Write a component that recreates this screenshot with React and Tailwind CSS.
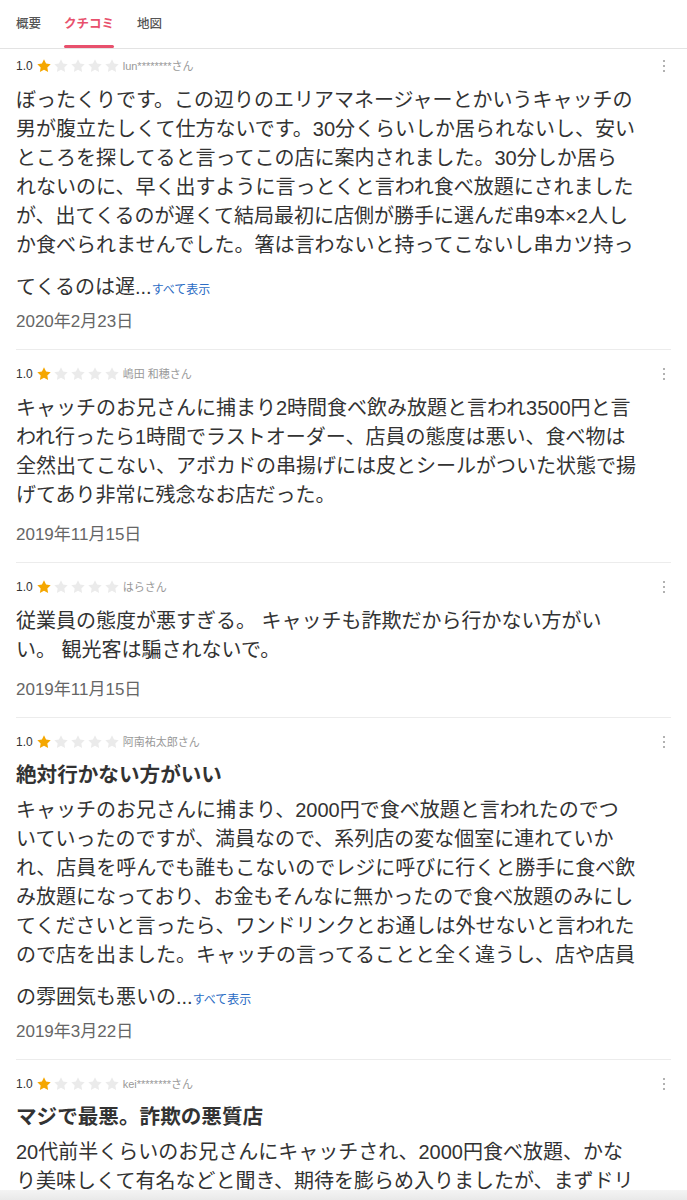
import React from "react";

const FONT = "font-['Liberation_Sans','Noto_Sans_CJK_JP',sans-serif]";

const reviews = [
  {
    user: "lun********さん",
    lines: [
      "ぼったくりです。この辺りのエリアマネージャーとかいうキャッチの",
      "男が腹立たしくて仕方ないです。30分くらいしか居られないし、安い",
      "ところを探してると言ってこの店に案内されました。30分しか居ら",
      "れないのに、早く出すように言っとくと言われ食べ放題にされました",
      "が、出てくるのが遅くて結局最初に店側が勝手に選んだ串9本×2人し",
      "か食べられませんでした。箸は言わないと持ってこないし串カツ持っ",
    ],
    more: "てくるのは遅...",
    date: "2020年2月23日",
  },
  {
    user: "嶋田 和穂さん",
    lines: [
      "キャッチのお兄さんに捕まり2時間食べ飲み放題と言われ3500円と言",
      "われ行ったら1時間でラストオーダー、店員の態度は悪い、食べ物は",
      "全然出てこない、アボカドの串揚げには皮とシールがついた状態で揚",
      "げてあり非常に残念なお店だった。",
    ],
    date: "2019年11月15日",
  },
  {
    user: "はらさん",
    lines: ["従業員の態度が悪すぎる。 キャッチも詐欺だから行かない方がい", "い。 観光客は騙されないで。"],
    date: "2019年11月15日",
  },
  {
    user: "阿南祐太郎さん",
    title: "絶対行かない方がいい",
    lines: [
      "キャッチのお兄さんに捕まり、2000円で食べ放題と言われたのでつ",
      "いていったのですが、満員なので、系列店の変な個室に連れていか",
      "れ、店員を呼んでも誰もこないのでレジに呼びに行くと勝手に食べ飲",
      "み放題になっており、お金もそんなに無かったので食べ放題のみにし",
      "てくださいと言ったら、ワンドリンクとお通しは外せないと言われた",
      "ので店を出ました。キャッチの言ってることと全く違うし、店や店員",
    ],
    more: "の雰囲気も悪いの...",
    date: "2019年3月22日",
  },
  {
    user: "kei********さん",
    title: "マジで最悪。詐欺の悪質店",
    lines: [
      "20代前半くらいのお兄さんにキャッチされ、2000円食べ放題、かな",
      "り美味しくて有名などと聞き、期待を膨らめ入りましたが、まずドリ",
    ],
    date: "",
  },
];

const Star = ({ on }) => (
  <svg viewBox="0 0 24 24" className="w-4 h-4">
    <polygon
      points="12,2 15.09,8.26 22,9.27 17,14.14 18.18,21.02 12,17.77 5.82,21.02 7,14.14 2,9.27 8.91,8.26"
      fill={on ? "#f5a700" : "#ebebeb"}
    />
  </svg>
);

const Review = ({ r, first }) => (
  <div className={`mx-4 border-b border-[#ececec] pb-[17px] ${first ? "pt-[7px]" : "pt-[14px]"}`}>
    {/* rating row */}
    <div className="h-5 flex items-center justify-between">
      <div className="flex items-center">
        <span className="text-[12px] text-[#333]">1.0</span>
        <div className="flex gap-[1px] ml-[3px]">
          <Star on />
          <Star />
          <Star />
          <Star />
          <Star />
        </div>
        <span className="ml-[3px] text-[11px] text-[#999]">{r.user}</span>
      </div>
      <div className="w-[14px] flex flex-col items-center gap-[2.5px]">
        <span className="w-[2.5px] h-[2.5px] rounded-full bg-[#999]" />
        <span className="w-[2.5px] h-[2.5px] rounded-full bg-[#999]" />
        <span className="w-[2.5px] h-[2.5px] rounded-full bg-[#999]" />
      </div>
    </div>

    {r.title && (
      <div className="mt-2 h-[29px] leading-[29px] text-[20.6px] font-bold text-[#333] whitespace-nowrap">
        {r.title}
      </div>
    )}

    <div className={`${r.title ? "mt-[7px]" : "mt-[10px]"} text-[20px] text-[#333]`}>
      {r.lines.map((l, i) => (
        <div key={i} className="h-[29px] leading-[29px] whitespace-nowrap">
          {l}
        </div>
      ))}
      {r.more && (
        <div className="mt-[13px] h-[29px] leading-[29px] whitespace-nowrap">
          {r.more}
          <span className="text-[12px] text-[#2b6cc4]">すべて表示</span>
        </div>
      )}
    </div>

    {r.date && (
      <div className={`${r.more ? "mt-[10px]" : "mt-[15px]"} h-5 leading-5 text-[17px] text-[#666]`}>
        {r.date}
      </div>
    )}
  </div>
);

export default function App() {
  return (
    <div className={`${FONT} bg-white w-[687px] h-[1200px] overflow-hidden relative`}>
      {/* tabs */}
      <div className="h-[49px] border-b border-[#e3e3e3] flex px-4 gap-[23px]">
        <div className="flex flex-col h-full">
          <div className="flex-1 flex items-center pt-[3px] text-[12.5px] font-medium text-[#555]">概要</div>
          <div className="h-[3px]" />
        </div>
        <div className="flex flex-col h-full">
          <div className="flex-1 flex items-center pt-[3px] text-[12.5px] font-bold text-[#e8506c]">クチコミ</div>
          <div className="h-[3px] rounded-full bg-[#e8506c]" />
        </div>
        <div className="flex flex-col h-full">
          <div className="flex-1 flex items-center pt-[3px] text-[12.5px] font-medium text-[#555]">地図</div>
          <div className="h-[3px]" />
        </div>
      </div>

      {reviews.map((r, i) => (
        <Review key={i} r={r} first={i === 0} />
      ))}

      {/* bottom shade */}
      <div className="absolute left-0 right-0 bottom-0 h-[10px] bg-gradient-to-b from-[#f4f4f4] to-[#e9e9e9]" />
    </div>
  );
}
